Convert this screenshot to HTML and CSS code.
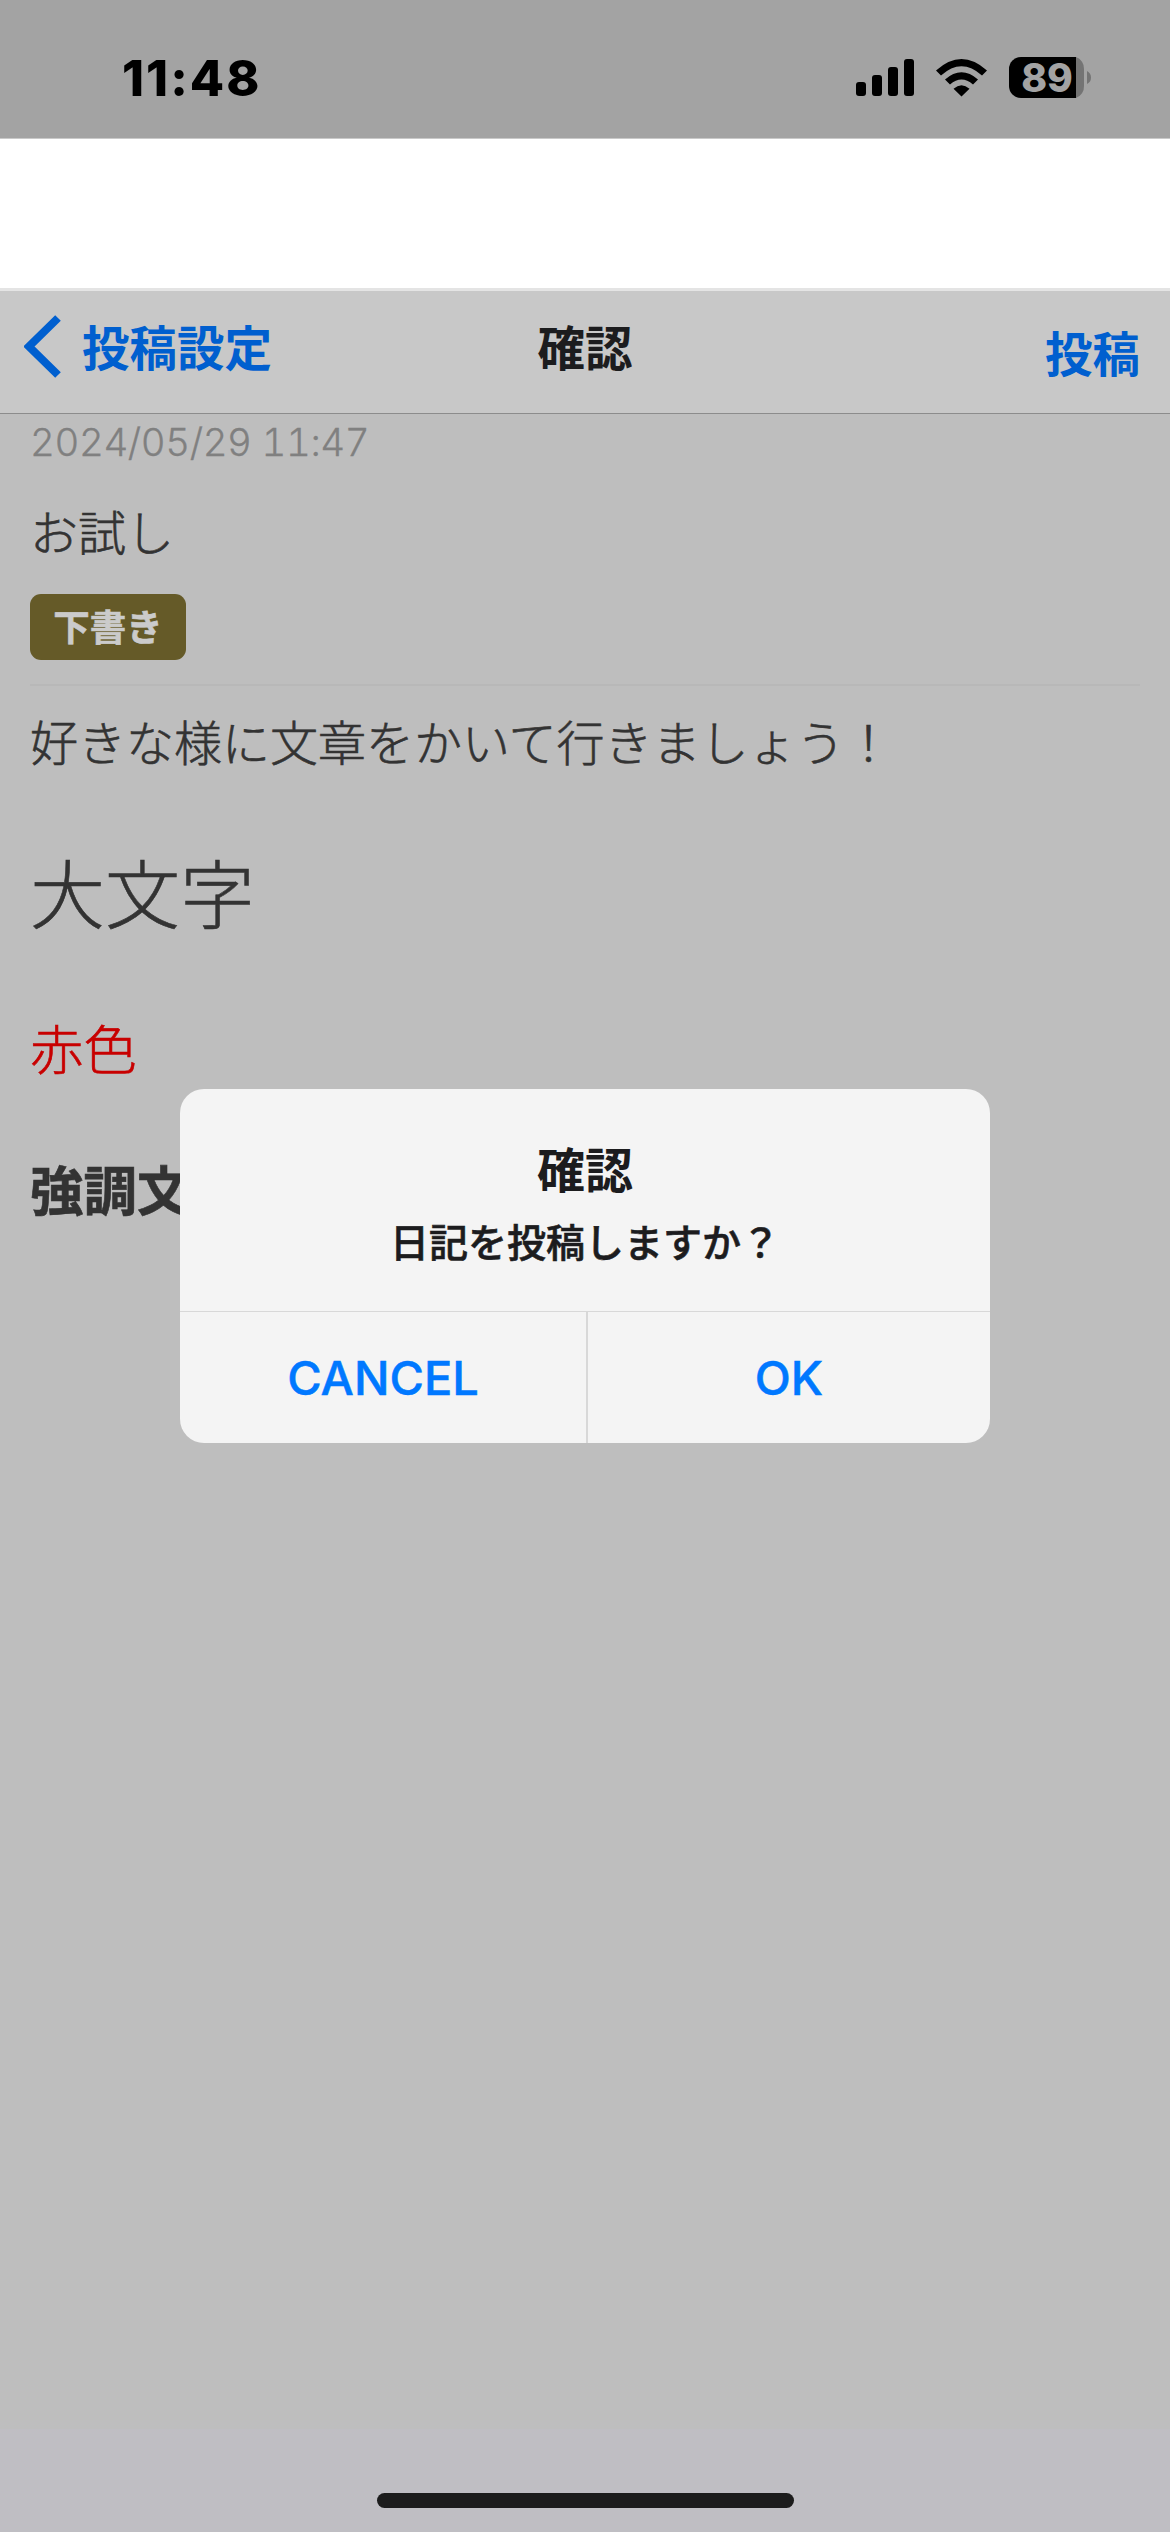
FILE: index.html
```html
<!DOCTYPE html>
<html lang="ja">
<head>
<meta charset="utf-8">
<title>確認</title>
<link rel="stylesheet" href="styles.css">
</head>
<body>
<div class="screen">
  <header class="status">
    <span class="clock">11:48</span>
    <div class="indicators">
      <svg class="signal" width="58" height="37" viewBox="0 0 58 37"><rect y="23" width="10" height="14" rx="3"/><rect x="16" y="16" width="10" height="21" rx="3"/><rect x="32" y="8" width="10" height="29" rx="3"/><rect x="48" width="10" height="37" rx="3"/></svg>
      <svg class="wifi" width="51" height="38" viewBox="0 0 51 38"><path d="M0 11.5Q25.5-11.500 51 11.500L46 16.500Q25.500-2 5 16.500ZM9 20.500Q25.500 6 42 20.500L37 25.500Q25.500 15.500 14 25.500ZM17.500 29.800Q25.500 22.500 33.500 29.800L25.500 37.500Z"/></svg>
      <svg class="battery" width="82" height="41" viewBox="0 0 82 41"><path d="M67 0A12 12 0 0 1 75 12V29A12 12 0 0 1 67 41ZM78 14Q82 16 82 20.500T78 27Z" fill="#747474"/><path d="M12 0H67V41H12A12 12 0 0 1 0 29V12A12 12 0 0 1 12 0Z"/><text x="38" y="34.500" text-anchor="middle">89</text></svg>
    </div>
  </header>
  <div class="gap"></div>
  <nav class="nav">
    <a class="back"><svg width="38" height="63" viewBox="0 0 38 63"><path d="M34 3L5 31.500L34 60" fill="none" stroke="#005fcf" stroke-width="8"/></svg><span>投稿設定</span></a>
    <h1>確認</h1>
    <a class="post">投稿</a>
  </nav>
  <main class="entry">
    <time>2024/05/29 11:47</time>
    <h2>お試し</h2>
    <span class="badge">下書き</span>
    <p class="body">好きな様に文章をかいて行きましょう！</p>
    <p class="large">大文字</p>
    <p class="red">赤色</p>
    <p class="strong">強調文字</p>
  </main>
  <footer class="home"><i></i></footer>
  <div class="dialog">
    <div class="message"><h3>確認</h3><p>日記を投稿しますか？</p></div>
    <div class="actions"><button>CANCEL</button><button>OK</button></div>
  </div>
</div>
</body>
</html>
```
FILE: styles.css
```css
* { box-sizing: border-box; margin: 0; padding: 0; }
body { background: #bebebe; font-family: "Noto Sans CJK JP", sans-serif; color: #333; }
.screen { position: relative; width: 1170px; height: 2532px; display: flex; flex-direction: column; overflow: hidden; }

.status { height: 139px; background: #a3a3a3; border-bottom: 1px solid #c9c9c9; display: flex; justify-content: space-between; padding: 0 79px 0 122px; }
.clock { font: 800 50px/60px Inter, sans-serif; letter-spacing: 2px; color: #000; margin-top: 48px; }
.indicators { display: flex; align-items: flex-start; padding-top: 57px; }
.signal { margin-top: 2px; }
.wifi { margin: 2px 22px 0; }
.battery { overflow: visible; }
.battery text { font: 800 39px Inter, sans-serif; fill: #a3a3a3; }

.gap { height: 152px; background: #fff; border-bottom: 3px solid #e4e4e4; }

.nav { height: 123px; background: #c8c8c8; border-bottom: 1px solid #8c8c8c; display: grid; grid-template-columns: 1fr auto 1fr; font-size: 47.500px; line-height: 60px; font-weight: 700; color: #005fcf; }
.back { display: flex; padding: 24px 0 0 24px; }
.back span { margin: 1px 0 0 20px; }
.nav h1 { font-size: 47.500px; font-weight: 700; color: #1c1c1e; padding-top: 25px; }
.post { justify-self: end; padding: 31px 30px 0 0; }

.entry { flex: 1; padding: 0 30px; font-weight: 300; -webkit-text-stroke: 0.600px currentColor; }
.entry time { display: block; font: 300 38.500px/56px Inter, sans-serif; font-variant-numeric: tabular-nums; letter-spacing: -0.450px; color: #808080; -webkit-text-stroke: 0.300px currentColor; }
.entry h2 { font-size: 48px; line-height: 80px; font-weight: 300; margin-top: 20px; }
.badge { display: block; width: 156px; height: 66px; margin-top: 24px; border-radius: 11px; background: #655a28; color: #cbcbcb; font-size: 36.500px; font-weight: 700; line-height: 64px; text-align: center; }
.body { margin-top: 24px; border-top: 2px solid #b8b8b8; font-size: 48px; line-height: 80px; padding-top: 14px; white-space: nowrap; }
.large { font-size: 75px; line-height: 110px; margin-top: 56px; }
.red { font-size: 53.500px; line-height: 80px; margin-top: 61px; color: #c80000; }
.strong { font-size: 53.500px; line-height: 80px; margin-top: 61px; font-weight: 700; }

.home { height: 103px; background: #bfbec3; padding-top: 64px; }
.home i { display: block; width: 417px; height: 15px; margin: 0 auto; border-radius: 8px; background: #1c1c1c; }

.dialog { position: absolute; left: 180px; top: 1089px; width: 810px; height: 354px; border-radius: 24px; background: #f4f4f4; overflow: hidden; color: #1c1c1e; text-align: center; }
.message { height: 223px; border-bottom: 1px solid #d8d8d8; padding-top: 48px; }
.message h3 { font-size: 48px; line-height: 60px; font-weight: 700; }
.message p { font-size: 39px; line-height: 56px; font-weight: 500; margin-top: 15px; -webkit-text-stroke: 0.600px currentColor; }
.actions { display: grid; grid-template-columns: 408px 1fr; height: 131px; }
.actions button { border: 0; background: none; color: #0078ff; font: 500 47px/60px Inter, sans-serif; -webkit-text-stroke: 0.500px currentColor; }
.actions button:first-child { border-right: 2px solid #d8d8d8; }
```
